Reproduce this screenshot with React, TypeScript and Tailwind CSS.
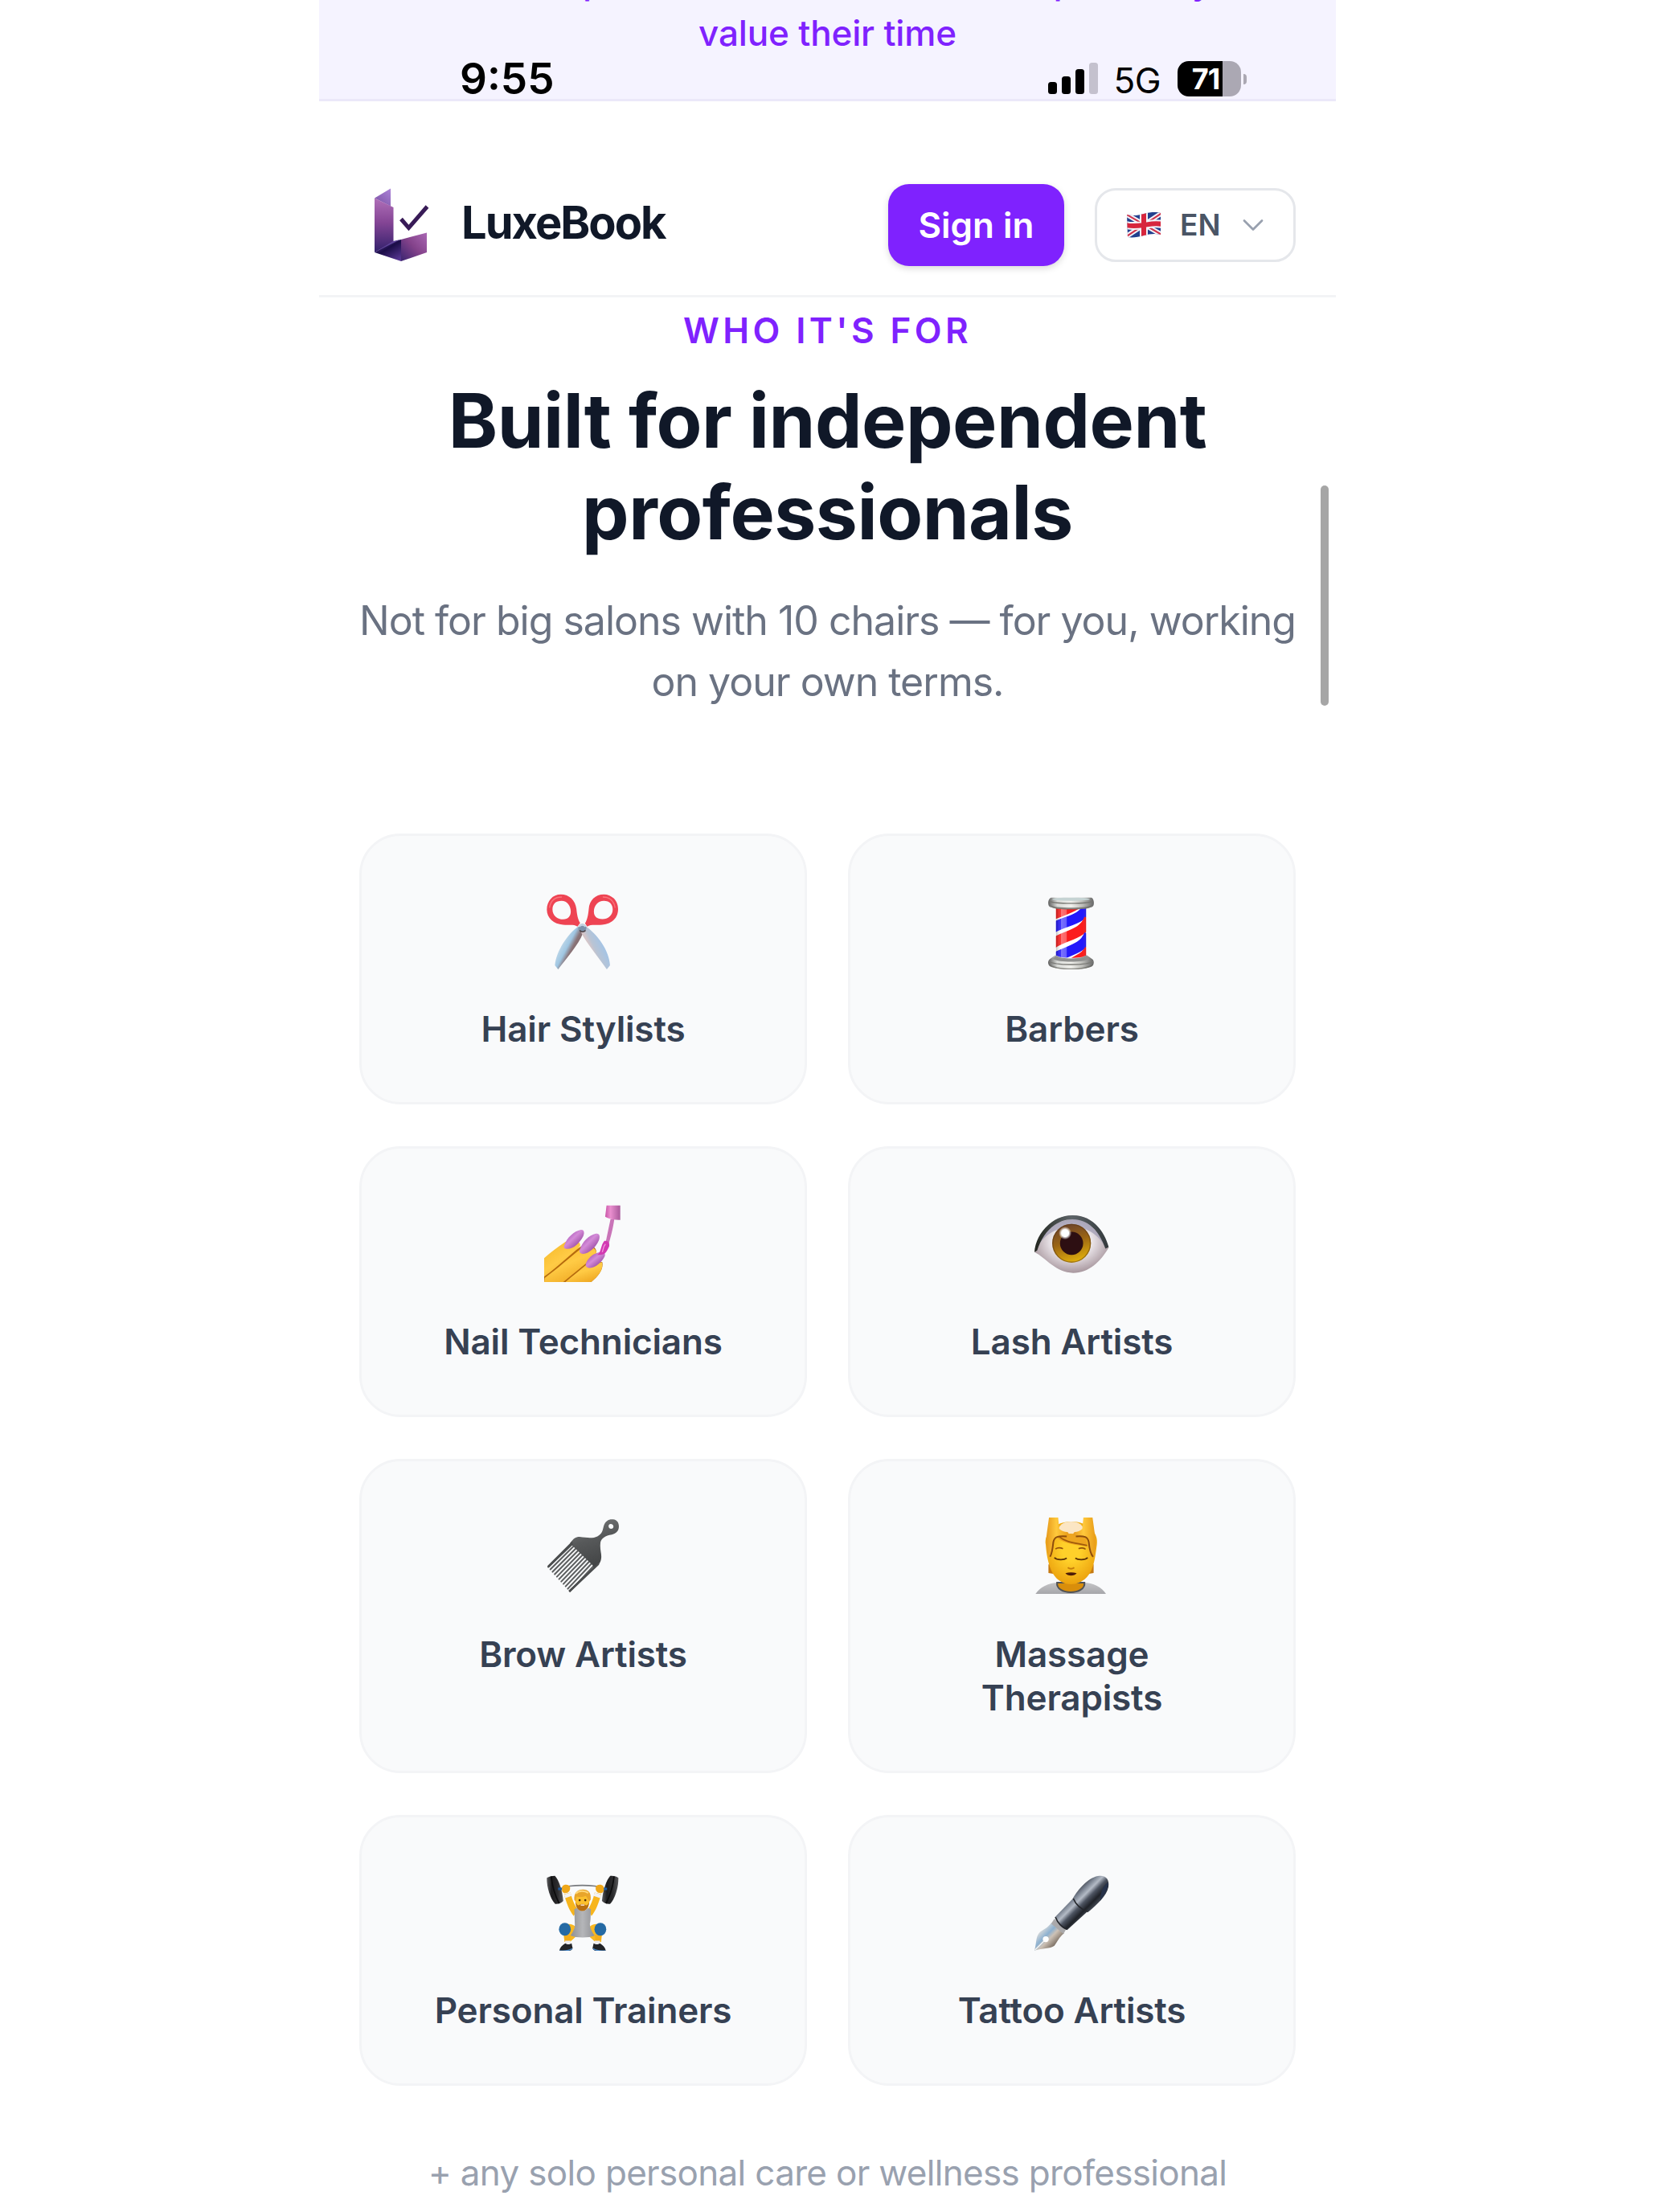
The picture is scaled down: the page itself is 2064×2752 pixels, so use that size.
import type { ReactNode } from 'react';
import { ChevronDown } from 'lucide-react';

function LogoMark() {
  return (
    <svg className="w-[70px] h-[92px] flex-shrink-0" viewBox="0 0 70 92" fill="none">
      <defs>
        <linearGradient id="logo-stem" x1="0" y1="0" x2="0" y2="1">
          <stop offset="0" stopColor="#b06fb8" />
          <stop offset="0.45" stopColor="#844595" />
          <stop offset="1" stopColor="#31206b" />
        </linearGradient>
        <linearGradient id="logo-flap" x1="1" y1="0" x2="0.2" y2="1">
          <stop offset="0" stopColor="#ac83d8" />
          <stop offset="1" stopColor="#7d54a6" />
        </linearGradient>
        <linearGradient id="logo-foot" x1="1" y1="0" x2="0" y2="1">
          <stop offset="0" stopColor="#aa68b4" />
          <stop offset="0.5" stopColor="#83428a" />
          <stop offset="1" stopColor="#3a2470" />
        </linearGradient>
        <linearGradient id="logo-base" x1="0.2" y1="0.2" x2="0.8" y2="1">
          <stop offset="0" stopColor="#4a2f85" />
          <stop offset="0.35" stopColor="#1b0d47" />
          <stop offset="1" stopColor="#563591" />
        </linearGradient>
      </defs>
      <path d="M0 12.500 20 0.500v22z" fill="url(#logo-flap)" />
      <path d="M0 12.500 23.500 24v43L0 80z" fill="url(#logo-stem)" />
      <path d="M0 80 24 66.500l9-2.500v27z" fill="url(#logo-base)" />
      <path d="M2 79 23 66l9-2z" fill="#5f4399" />
      <path d="M33 64 65 55.500V80L33 91z" fill="url(#logo-foot)" />
      <path d="M33 38.500 42.500 49.500 65.500 23" stroke="#381b57" strokeWidth="5" />
    </svg>
  );
}

function FlagIcon() {
  return (
    <svg className="w-[43px] h-[32px]" viewBox="0 0 43 32">
      <defs>
        <clipPath id="flag-shape">
          <path d="M0 3c7 2 14 1 21-1s14-3 21-1v27c-7-2-14-1-21 1s-14 3-20 2z" />
        </clipPath>
      </defs>
      <g clipPath="url(#flag-shape)">
        <path d="M0 0h43v32H0z" fill="#23408e" />
        <path d="M-2 2 45 29M-2 31 45 0" stroke="#f3f3f8" strokeWidth="6" />
        <path d="M-2 2 45 29M-2 31 45 0" stroke="#d0314a" strokeWidth="2" />
        <path d="M21 0v32M-1 16c8 2 15 1 22 0s14-3 23-1" stroke="#f3f3f8" strokeWidth="10" fill="none" />
        <path d="M21 0v32M-1 16c8 2 15 1 22 0s14-3 23-1" stroke="#d7263d" strokeWidth="6" fill="none" />
      </g>
    </svg>
  );
}

function ScissorsIcon() {
  return (
    <svg className="w-[97px] h-[97px]" viewBox="110 85 290 290" fill="none">
      <defs>
        <linearGradient id="blade-l" x1="0" y1="0" x2="1" y2="0.8">
          <stop offset="0.2" stopColor="#dbe6ee" />
          <stop offset="0.5" stopColor="#9fc6e2" />
          <stop offset="0.62" stopColor="#8a7478" />
          <stop offset="1" stopColor="#6b5558" />
        </linearGradient>
        <linearGradient id="blade-r" x1="1" y1="0.2" x2="0" y2="0.9">
          <stop offset="0.25" stopColor="#a3c4e6" />
          <stop offset="0.5" stopColor="#b9c4d4" />
          <stop offset="0.6" stopColor="#d6c6c9" />
          <stop offset="1" stopColor="#9b8587" />
        </linearGradient>
      </defs>
      <path d="M236 216c-38 28-80 88-86 144l12 15c28-38 76-92 92-134z" fill="url(#blade-l)" />
      <path d="M264 214c44 30 88 90 91 146l-12 15c-26-38-72-92-96-138z" fill="url(#blade-r)" />
      <path
        fillRule="evenodd"
        d="M172 96c32 0 54 22 58 54 2 22 6 42 14 52l-10 14c-14-10-32-4-54-7-34-3-60-24-60-56 0-33 22-57 52-57zm3 24c-22 0-34 12-34 32 0 22 18 37 40 37 18 0 28-12 28-29 0-22-14-40-34-40z"
        fill="#ee4453"
      />
      <path
        fillRule="evenodd"
        d="M332 96c-32 0-54 22-56 54-2 22-6 42-14 54l8 12c14-10 34-4 56-7 36-4 59-24 59-58 0-32-24-55-53-55zm0 24c22 0 33 14 33 32 0 22-18 36-38 36-22 0-32-10-32-28 0-22 15-40 37-40z"
        fill="#ee4453"
      />
      <path d="M130 146c4-28 20-40 46-40M374 146c-4-26-18-40-46-40" stroke="#ff8a8f" strokeWidth="4" opacity="0.7" />
      <circle cx="252" cy="221" r="15" fill="#7c93ab" />
      <path d="M240 216c6-8 18-8 24 0" stroke="#c6d6e4" strokeWidth="6" />
      <path d="M242 230c6 7 16 7 22 0" stroke="#4d4347" strokeWidth="5" />
    </svg>
  );
}

function BarberPoleIcon() {
  return (
    <svg className="w-[97px] h-[97px]" viewBox="104 85 290 290">
      <defs>
        <linearGradient id="pole-cap" x1="0" y1="0" x2="1" y2="0">
          <stop offset="0" stopColor="#5f5f5f" />
          <stop offset="0.2" stopColor="#d8dad7" />
          <stop offset="0.5" stopColor="#f0f0ec" />
          <stop offset="0.75" stopColor="#bdbdb9" />
          <stop offset="1" stopColor="#666" />
        </linearGradient>
        <linearGradient id="pole-shade" x1="0" y1="0" x2="1" y2="0">
          <stop offset="0" stopColor="#000" stopOpacity="0.25" />
          <stop offset="0.16" stopColor="#fff" stopOpacity="0.1" />
          <stop offset="0.17" stopColor="#fff" stopOpacity="0.4" />
          <stop offset="0.35" stopColor="#fff" stopOpacity="0.3" />
          <stop offset="0.37" stopColor="#fff" stopOpacity="0" />
          <stop offset="0.9" stopColor="#fff" stopOpacity="0" />
          <stop offset="1" stopColor="#000" stopOpacity="0.15" />
        </linearGradient>
        <clipPath id="pole-body">
          <path d="M190 145h112v190H190z" />
        </clipPath>
      </defs>
      {/* stripes sweep up to the right, cropped to the glass */}
      <g clipPath="url(#pole-body)" fill="none" strokeWidth="38">
        <path d="M190 145h112v190H190z" fill="#fff" />
        <path d="M170 172C220 150 280 140 310 80" stroke="#fb1d1d" strokeWidth="44" />
        <path d="M170 226C220 190 290 200 314 130" stroke="#2318fb" />
        <path d="M170 284C220 246 290 250 314 186" stroke="#fb1d1d" />
        <path d="M170 342C220 304 290 308 314 244" stroke="#2318fb" />
        <path d="M230 372C260 336 296 340 316 300" stroke="#fb1d1d" />
        <path d="M190 145h112v190H190z" fill="url(#pole-shade)" />
      </g>
      <path d="M172 108h150c10 4 12 28 4 34-16 12-144 12-160 0-8-8-6-30 6-34z" fill="url(#pole-cap)" />
      <path d="M166 122c20 10 140 10 160 0" stroke="#777772" strokeWidth="4" fill="none" />
      <ellipse cx="246" cy="114" rx="70" ry="6" fill="#c5d3d3" />
      <path d="M166 135c20 14 140 14 160 0l-12 11c-24 8-112 8-136 0z" fill="#6b6b66" opacity="0.8" />
      <path d="M188 322c20 14 96 14 116 0l22 16c8 8 4 22-2 26-30 16-126 16-156 0-8-6-10-18-2-26z" fill="url(#pole-cap)" />
      <path d="M190 324c20 14 94 14 112 0l12 12c-24 14-112 14-136 0z" fill="#8f908f" />
      <path d="M164 345c20 16 144 16 164 0" stroke="#7a7a76" strokeWidth="4" fill="none" />
      <path d="M164 355c24 22 140 22 164 0-2 28-162 28-164 0z" fill="#65655f" opacity="0.7" />
    </svg>
  );
}

function NailPolishIcon() {
  return (
    <svg className="w-[97px] h-[97px]" viewBox="110 85 290 290">
      <defs>
        <linearGradient id="finger" x1="0.2" y1="0" x2="0.8" y2="1">
          <stop offset="0" stopColor="#f6b92a" />
          <stop offset="0.45" stopColor="#ffcb45" />
          <stop offset="1" stopColor="#eda41e" />
        </linearGradient>
        <linearGradient id="nail" x1="0" y1="0" x2="1" y2="1">
          <stop offset="0.1" stopColor="#9c4bac" />
          <stop offset="0.45" stopColor="#d48bd8" />
          <stop offset="0.9" stopColor="#84368f" />
        </linearGradient>
        <linearGradient id="brush-cap" x1="0" y1="0" x2="1" y2="0">
          <stop offset="0" stopColor="#c954a8" />
          <stop offset="0.35" stopColor="#ea8fcf" />
          <stop offset="1" stopColor="#a9589a" />
        </linearGradient>
      </defs>
      <path d="M110 286c26-24 50-40 78-60 24-14 60-4 56 14L150 376h-40z" fill="url(#finger)" />
      <path d="M110 355c50-36 90-76 136-112 26-12 62-2 58 24L210 376H110z" fill="#b56a0d" />
      <path d="M112 360c50-36 90-74 134-108 26-14 60-6 58 16L210 376H110z" fill="url(#finger)" />
      <path d="M180 376c28-24 56-46 88-72l58-4c6 26-12 52-42 76z" fill="#b56a0d" />
      <path d="M188 376c28-24 54-44 80-66l57-8c6 26-12 50-42 74z" fill="url(#finger)" />
      <path d="M185 238c10-28 36-52 62-57 12-2 14 12 8 24-14 26-36 46-58 47-12 0-16-6-12-14z" fill="url(#nail)" />
      <path d="M243 254c8-28 34-54 60-59 14-2 16 12 10 26-12 26-36 48-58 49-12 0-16-8-12-16z" fill="url(#nail)" />
      <path d="M265 308c6-20 24-36 44-42 18-6 32 0 26 14-10 20-32 40-54 43-12 0-18-6-16-15z" fill="url(#nail)" />
      <path d="M357 140h14c-4 32-12 62-20 90l-12-4z" fill="#c974b8" />
      <path d="M342 90h51v54c-18 2-42-4-56-12z" fill="url(#brush-cap)" />
      <path d="M334 222c16-2 20 8 18 20-6 14-12 24-18 28-10 4-20 4-26 4 14-8 12-36 26-52z" fill="#d23ab2" />
      <path d="M338 234c-8 8-8 20-12 30" stroke="#f296dd" strokeWidth="4" fill="none" />
    </svg>
  );
}

function EyeIcon() {
  return (
    <svg className="w-[97px] h-[97px]" viewBox="104 85 290 290">
      <defs>
        <radialGradient id="eye-white" cx="0.5" cy="0.45" r="0.55">
          <stop offset="0.4" stopColor="#f7f4f8" />
          <stop offset="1" stopColor="#a8979e" />
        </radialGradient>
        <linearGradient id="iris" x1="0.35" y1="0" x2="0.65" y2="1">
          <stop offset="0" stopColor="#6b432c" />
          <stop offset="0.45" stopColor="#9a6414" />
          <stop offset="1" stopColor="#e5b40c" />
        </linearGradient>
        <linearGradient id="lid" x1="0" y1="0" x2="1" y2="0">
          <stop offset="0" stopColor="#22261f" />
          <stop offset="0.5" stopColor="#5d6468" />
          <stop offset="1" stopColor="#33393c" />
        </linearGradient>
        <radialGradient id="glint">
          <stop offset="0.55" stopColor="#fff" />
          <stop offset="1" stopColor="#fff" stopOpacity="0" />
        </radialGradient>
      </defs>
      <path d="M110 264c10-64 66-136 142-137 74 0 114 58 134 120-30 52-74 94-132 94-64 0-102-56-144-77z" fill="url(#eye-white)" />
      <path d="M118 250c20-50 64-108 136-108 60 0 96 50 118 100-18-30-50-66-110-70-54-4-110 14-144 78z" fill="#9793ae" opacity="0.65" />
      <path d="M110 264c4-68 66-138 142-137 74 0 118 58 134 118l-12 6c-20-56-56-108-122-109-64 0-112 50-132 116z" fill="url(#lid)" />
      <circle cx="248" cy="231" r="72" fill="url(#iris)" />
      <circle cx="248" cy="231" r="70" fill="none" stroke="#5c3710" strokeWidth="4" opacity="0.5" />
      <circle cx="248" cy="231" r="43" fill="#2d0f12" />
      <circle cx="224" cy="193" r="24" fill="url(#glint)" />
    </svg>
  );
}

function CombIcon() {
  const teeth = [0, 1, 2, 3, 4, 5, 6, 7, 8, 9, 10];

  return (
    <svg className="w-[97px] h-[97px]" viewBox="110 85 290 290">
      <defs>
        <linearGradient id="comb" x1="0" y1="0" x2="0.3" y2="1">
          <stop offset="0" stopColor="#7b7d7e" />
          <stop offset="0.5" stopColor="#57595a" />
          <stop offset="1" stopColor="#434546" />
        </linearGradient>
      </defs>
      {teeth.map((i) => (
        <line
          key={i}
          x1={212 + i * 8.2}
          y1={186 + i * 8.2}
          x2={125 + i * 8.1}
          y2={272 + i * 9}
          stroke="#5c5e5f"
          strokeWidth="6"
          strokeLinecap="round"
        />
      ))}
      <path
        fillRule="evenodd"
        d="M206 184c14-18 20-24 36-24 30 4 50 6 66-2 20-10 20-26 24-40 6-18 20-25 34-23 20 2 24 20 21 34-4 16-20 22-34 24-22 6-34 16-34 34-2 22 6 38 3 54-2 18-14 26-26 36l-6-12zM357 112c-12 2-8 18 2 18 12 0 12-18-2-18z"
        fill="url(#comb)"
      />
      <path d="m214 176-92 92 5 7 90-86zM316 252l-116 108 6 6 108-102z" fill="#4b4d4e" />
    </svg>
  );
}

function MassageIcon() {
  return (
    <svg className="w-[97px] h-[97px]" viewBox="104 85 290 290" fill="none">
      <defs>
        <radialGradient id="face" cx="0.5" cy="0.45" r="0.6">
          <stop offset="0.3" stopColor="#ffd02a" />
          <stop offset="1" stopColor="#e99c0a" />
        </radialGradient>
        <linearGradient id="arm" x1="0" y1="0" x2="1" y2="0">
          <stop offset="0" stopColor="#e79a1c" />
          <stop offset="0.45" stopColor="#ffc93c" />
          <stop offset="1" stopColor="#e89c18" />
        </linearGradient>
        <linearGradient id="shirt" x1="0" y1="0" x2="0" y2="1">
          <stop offset="0" stopColor="#c4c4c6" />
          <stop offset="1" stopColor="#a6a6aa" />
        </linearGradient>
      </defs>
      <path d="M114 372c14-24 50-42 84-42h94c36 0 70 18 84 42z" fill="url(#shirt)" />
      <path d="M194 330c-6 48 108 48 102 0z" fill="#d98e0b" stroke="#505256" strokeWidth="6" />
      <path d="M162 262v32l22 4-6-36zM330 262v32l-22 4 6-36z" fill="#c57911" />
      <path d="M152 190c-8-44 34-86 94-87 62 0 104 40 96 87-4 30-8 66-20 94-10 22-34 52-76 52s-64-30-74-52c-12-28-18-64-20-94z" fill="url(#face)" />
      <path d="M198 144c-2-28 22-41 48-41s50 13 48 41c-26 12-70 12-96 0z" fill="#fbe6c4" />
      <path d="M192 154c24-8 80-8 108 0l8 42c-38-4-84-10-112-30z" fill="#eda520" />
      <path d="M200 158c28 24 64 24 106 34" stroke="#a05a0b" strokeWidth="5" />
      <path d="M164 88h34l4 42c8 8 20 12 30 12 8 4 6 14-2 16-14 2-28-4-38 2-14 8-10 30-14 50-2 16-8 24-14 26-10-20-12-64-8-90z" fill="url(#arm)" />
      <path d="M326 88h-34l-4 42c-8 8-18 12-28 12-8 4-6 14 2 16 14 2 26-4 36 2 14 8 10 30 14 50 2 16 12 24 18 26 10-20 8-64 4-90z" fill="url(#arm)" />
      <path d="M168 234c8-14 10-34 12-54 4-22 18-24 50-22M328 234c-12-14-14-34-16-54-4-22-16-24-48-22" stroke="#8d4d0c" strokeWidth="6" />
      <path d="M188 205c8-6 20-5 28-1M274 204c8-4 20-4 26 2" stroke="#94530b" strokeWidth="5" />
      <path d="M184 237c10 10 36 10 46 2M262 239c10 8 36 8 46-2" stroke="#593006" strokeWidth="5" />
      <path d="M234 274c8 6 16 6 24 0" stroke="#c57c0a" strokeWidth="6" />
      <path d="M225 295c14-4 28-4 42 0-8 12-34 12-42 0z" fill="#4d1c08" />
    </svg>
  );
}

function WeightlifterIcon() {
  return (
    <svg className="w-[97px] h-[97px]" viewBox="110 85 290 290" fill="none">
      <defs>
        <linearGradient id="plate" x1="0" y1="0" x2="1" y2="0">
          <stop offset="0" stopColor="#5b5b5d" />
          <stop offset="0.3" stopColor="#1c1c1e" />
          <stop offset="0.65" stopColor="#2b2b2d" />
          <stop offset="1" stopColor="#58585a" />
        </linearGradient>
        <linearGradient id="singlet" x1="0" y1="0" x2="1" y2="0">
          <stop offset="0" stopColor="#8e8f93" />
          <stop offset="0.5" stopColor="#b5b6b9" />
          <stop offset="1" stopColor="#909195" />
        </linearGradient>
      </defs>
      <path d="M176 142c30-14 120-14 156 0" stroke="#77797d" strokeWidth="5" />
      <path d="M120 104c8-6 20-8 30-8 14 14 28 54 31 94-6 8-18 12-30 11-18-18-32-62-31-97z" fill="url(#plate)" />
      <path d="M386 104c-8-6-20-8-30-8-14 14-28 54-31 94 6 8 18 12 30 11 18-18 32-62 31-97z" fill="url(#plate)" />
      <path d="M136 99c4 34 14 70 30 100M370 99c-4 34-14 70-30 100" stroke="#0c0c0d" strokeWidth="5" />
      <path d="M162 145h14M330 145h14" stroke="#1f5ea8" strokeWidth="9" />
      <path d="m184 164 24-6c6 26 16 48 26 62l-14 26c-16-20-28-50-36-82zM322 164l-24-6c-6 26-16 48-24 62l12 26c16-20 28-50 36-82z" fill="#f7b51d" />
      <path d="m184 166 24-8 4 13-24 8zM322 166l-24-8-4 13 24 8z" fill="#f1f1f4" />
      <path d="M178 134c8-8 26-6 28 4s-2 20-14 22-20-6-14-26zM330 134c-8-8-26-6-28 4s2 20 14 22 20-6 14-26z" fill="#efa718" />
      <path d="M178 286c16-18 42-10 54 4l-6 34-20 18h-20zM328 286c-16-18-42-10-54 4l6 34 20 18h22z" fill="#f9b820" />
      <path d="M184 316h24l-2 28h-18zM298 316h26l-6 28h-16z" fill="#f3ad1b" />
      <path d="M232 216c12 14 30 14 42 0l10 4c-2 24 0 38-4 54 0 16 10 36 18 44-20 10-70 10-90 0 8-10 18-28 16-44 0-18-2-36-2-54z" fill="url(#singlet)" />
      <ellipse cx="187" cy="295" rx="22" ry="24" fill="#256aa4" />
      <ellipse cx="319" cy="295" rx="22" ry="24" fill="#256aa4" />
      <ellipse cx="252" cy="187" rx="27" ry="35" fill="#fbc02d" />
      <path d="M227 194c6 12 10 14 15 10 8-4 12-4 20 0 6 4 10 2 15-10 0 20-10 33-25 33s-25-13-25-33z" fill="#b96f10" />
      <path d="M222 186c-2-26 12-39 32-39s32 12 29 38l-6 8c-2-8-8-16-12-22-10 5-24 5-34 2-2 6-3 12-4 18z" fill="#e8a52a" />
      <path d="M228 162c10-12 32-12 46-2" stroke="#ffd87a" strokeWidth="6" />
      <circle cx="242" cy="187" r="4" fill="#4f2c08" />
      <circle cx="263" cy="187" r="4" fill="#4f2c08" />
      <path d="M246 205h14" stroke="#f4d8bd" strokeWidth="5" />
      <path d="M188 338h20v12h-20zM298 338h20v12h-20z" fill="#ececf0" />
      <path d="M188 347c10 6 16 4 24 0l4 18c-2 8-12 12-24 12h-25c0-16 12-22 21-30zM318 347c-10 6-16 4-24 0l-4 18c2 8 12 12 24 12h25c0-16-12-22-21-30z" fill="#232427" />
      <path d="M168 375c20 2 34 0 46-8M338 375c-20 2-34 0-46-8" stroke="#4687c9" strokeWidth="4" />
    </svg>
  );
}

function FountainPenIcon() {
  return (
    <svg className="w-[97px] h-[97px]" viewBox="104 85 290 290" fill="none">
      <defs>
        <linearGradient id="pen-body" gradientUnits="userSpaceOnUse" x1="240" y1="170" x2="310" y2="240">
          <stop offset="0" stopColor="#3a3e48" />
          <stop offset="0.2" stopColor="#7b8492" />
          <stop offset="0.38" stopColor="#b4bbc6" />
          <stop offset="0.56" stopColor="#4c5360" />
          <stop offset="0.78" stopColor="#1f2228" />
          <stop offset="1" stopColor="#4a515c" />
        </linearGradient>
        <linearGradient id="nib" gradientUnits="userSpaceOnUse" x1="130" y1="300" x2="190" y2="360">
          <stop offset="0" stopColor="#dcdcda" />
          <stop offset="0.35" stopColor="#8cb0d0" />
          <stop offset="0.55" stopColor="#cdc2b6" />
          <stop offset="1" stopColor="#6b5e52" />
        </linearGradient>
      </defs>
      <path d="M172 272 220 310c-18 14-24 30-36 46-16 12-44 8-74 18 8-26 4-50 18-66 14-12 32-18 44-36z" fill="url(#nib)" />
      <path d="m112 372 36-36" stroke="#f4f4f4" strokeWidth="4" />
      <circle cx="152" cy="332" r="11" fill="#fff" />
      <path d="m184 256 44 38-10 18-46-38z" fill="#aaa9ab" />
      <path d="M186 250 254 180l52 50-74 67c-22-6-38-24-46-47z" fill="url(#pen-body)" />
      <path d="M254 178c18-30 54-74 92-81 28-6 44 12 39 40-6 34-44 66-73 92-26-8-48-26-58-51z" fill="url(#pen-body)" />
      <path d="M384 120c4 24-16 50-30 70 2-30 8-56 30-70z" fill="#26324a" />
      <path d="M254 180c10 24 32 42 56 50M188 250c8 20 22 36 44 46" stroke="#24262b" strokeWidth="5" />
    </svg>
  );
}

interface ProfessionCardProps {
  icon: ReactNode;
  label: string;
}

function ProfessionCard({ icon, label }: ProfessionCardProps) {
  return (
    <div className="flex flex-col items-center rounded-[51px] border-[3px] border-gray-100 bg-gray-50 px-[68px] pt-[69px] pb-[64px]">
      {icon}
      <p className="mt-[47px] text-center text-[44px] leading-[54px] font-semibold tracking-[-0.15px] text-gray-700">
        {label}
      </p>
    </div>
  );
}

const professions = [
  { label: 'Hair Stylists', icon: <ScissorsIcon /> },
  { label: 'Barbers', icon: <BarberPoleIcon /> },
  { label: 'Nail Technicians', icon: <NailPolishIcon /> },
  { label: 'Lash Artists', icon: <EyeIcon /> },
  { label: 'Brow Artists', icon: <CombIcon /> },
  { label: 'Massage Therapists', icon: <MassageIcon /> },
  { label: 'Personal Trainers', icon: <WeightlifterIcon /> },
  { label: 'Tattoo Artists', icon: <FountainPenIcon /> },
];

function StatusBar() {
  return (
    <div className="absolute inset-x-0 top-[71px] flex h-[54px] items-center justify-between pr-[111px] pl-[175px] text-black">
      <span className="text-[53px] leading-[54px] font-semibold">9:55</span>
      <div className="flex items-center">
        <svg className="w-[62px] h-[40px]" viewBox="0 0 62 40">
          <rect x="0" y="24" width="11" height="15" rx="3.5" />
          <rect x="17" y="17" width="11" height="22" rx="3.5" />
          <rect x="34" y="8" width="11" height="31" rx="3.5" />
          <rect x="51" y="0" width="11" height="39" rx="3.5" fill="#c4c1ce" />
        </svg>
        <span className="ml-[19px] pt-[3px] text-[44px] leading-[54px] tracking-[-0.5px]">5G</span>
        <div className="ml-[21px] flex h-[44px] w-[79px] items-center justify-center overflow-hidden rounded-[14px] bg-[linear-gradient(90deg,#000_71%,#aba8b3_71%)] pr-[9px]">
          <span className="text-[36px] leading-[44px] font-bold tracking-[-1px] text-white">71</span>
        </div>
        <div className="ml-[3px] h-[13px] w-[4px] rounded-r-full bg-[#aba8b3]" />
      </div>
    </div>
  );
}

export default function App() {
  return (
    <div className="flex h-[2752px] justify-center overflow-hidden bg-white pr-[5px] font-['Inter',sans-serif]">
      <div className="relative w-[1265px]">
        <div className="flex h-[126px] flex-col justify-end overflow-hidden border-b-[3px] border-[#ebe8f9] bg-violet-50 pb-[50px] text-center text-[44px] leading-[64px] font-medium tracking-[-0.15px] text-[#7f22fe]">
          <p className="whitespace-nowrap">Built for professionals who like a simpler diary</p>
          <p>value their time</p>
        </div>
        <StatusBar />

        <header className="flex h-[244px] items-center justify-between border-b-[3px] border-gray-100 pt-[66px] pr-[50px] pl-[69px]">
          <div className="flex items-center gap-[38px]">
            <LogoMark />
            <span className="pb-[5px] text-[56px] leading-none font-bold tracking-[-2px] text-gray-900">LuxeBook</span>
          </div>
          <div className="flex items-center gap-[38px]">
            <button className="h-[102px] w-[219px] rounded-[26px] bg-[#7f22fe] text-[44px] font-semibold text-white shadow-[0_3px_8px_rgba(0,0,0,0.15)]">
              Sign in
            </button>
            <button className="flex h-[92px] w-[250px] items-center rounded-[26px] border-[3px] border-gray-200 pl-[37px] text-[37px] font-semibold text-gray-600">
              <FlagIcon />
              <span className="ml-[23px]">EN</span>
              <ChevronDown className="ml-[18px] h-[44px] w-[44px] text-gray-400" strokeWidth={1.5} />
            </button>
          </div>
        </header>

        <section className="px-[50px] pt-[9px] text-center">
          <p className="text-[44px] leading-[64px] font-semibold tracking-[4.4px] text-[#7f22fe]">WHO IT&apos;S FOR</p>
          <h1 className="mt-[23px] text-[93px] leading-[114px] font-bold tracking-[-0.5px] text-gray-900">
            Built for independent professionals
          </h1>
          <p className="mt-[40px] text-[50px] leading-[76px] tracking-[-1px] whitespace-nowrap text-gray-500">
            Not for big salons with 10 chairs — for you, working
            <br />
            on your own terms.
          </p>

          <div className="mt-[151px] grid grid-cols-2 gap-x-[51px] gap-y-[52px]">
            {professions.map((item) => (
              <ProfessionCard key={item.label} icon={item.icon} label={item.label} />
            ))}
          </div>

          <p className="mt-[76px] text-[44px] leading-[64px] tracking-[-0.68px] whitespace-nowrap text-gray-400">
            + any solo personal care or wellness professional
          </p>
        </section>

        <div className="absolute top-[604px] right-[9px] h-[274px] w-[10px] rounded-full bg-[#a6a6a6]" />
      </div>
    </div>
  );
}
